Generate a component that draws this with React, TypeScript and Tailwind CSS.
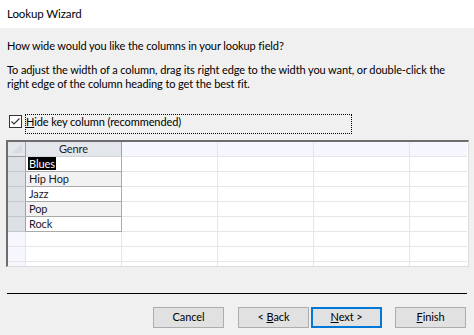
import React from 'react';

const genres = ['Blues', 'Hip Hop', 'Jazz', 'Pop', 'Rock'];
const blankRows = [0, 1, 2];

function Btn({ children, focus }: { children: React.ReactNode; focus?: boolean }) {
  return (
    <div
      className={`w-[71px] h-[21px] flex items-center justify-center bg-[#e1e1e1] ${
        focus ? 'border-2 border-[#0078d7]' : 'border border-[#adadad]'
      }`}
    >
      <span>{children}</span>
    </div>
  );
}

export default function App() {
  return (
    <div
      className="w-[474px] h-[335px] overflow-hidden bg-[#f0f0f0] text-black text-[11px] tracking-[-0.1px]"
      style={{ fontFamily: '"Segoe UI", Lato, sans-serif' }}
    >
      {/* title bar */}
      <div className="h-[28px] bg-white flex items-center pl-[7px] text-[11.5px]">Lookup Wizard</div>

      <div className="flex flex-col">
        <p className="mt-[10px] ml-[7px] leading-[15px]">How wide would you like the columns in your lookup field?</p>
        <p className="mt-[10px] ml-[7px] leading-[14px] whitespace-nowrap">
          To adjust the width of a column, drag its right edge to the width you want, or double-click the
          <br />
          right edge of the column heading to get the best fit.
        </p>

        {/* checkbox */}
        <div className="mt-[23px] flex items-start">
          <div className="ml-[9px] mt-[1px] w-[13px] h-[13px] bg-white border border-[#333] flex items-center justify-center">
            <svg width="11" height="11" viewBox="0 0 11 11">
              <path d="M1.5 5.5 L4 8 L9.5 2.5" fill="none" stroke="#333" strokeWidth="1.2" />
            </svg>
          </div>
          <div className="ml-[3px] w-[327px] h-[20px] border border-dotted border-black leading-[14px]">
            <span className="underline">H</span>ide key column (recommended)
          </div>
        </div>

        {/* grid */}
        <div className="mt-[6px] ml-[6px] w-[463px] h-[127px] border-t-2 border-l-2 border-t-[#6d6d6d] border-l-[#6d6d6d] border-r border-b border-r-[#dcdcdc] border-b-[#dcdcdc] bg-white overflow-hidden">
          {/* header */}
          <div className="flex h-[15px]">
            <div className="w-[18px] h-[15px] bg-[#e3e6ea] border-r border-b border-[#a0a0a0]">
              <svg width="17" height="14" viewBox="0 0 17 14">
                <path d="M4 11 L14 2 L14 11 Z" fill="#d6dbe1" />
              </svg>
            </div>
            <div className="w-[96px] h-[15px] bg-[#e3e6ea] border-r border-r-[#a0a0a0] border-b border-b-[#d4d4d4] text-center leading-[14px] text-[#1e1e1e]">
              Genre
            </div>
            <div className="w-[96px] h-[15px] bg-[#f5f6fe] border-r border-b border-[#e6e6e6]" />
            <div className="w-[96px] h-[15px] bg-[#f5f6fe] border-r border-b border-[#e6e6e6]" />
            <div className="w-[96px] h-[15px] bg-[#f5f6fe] border-r border-b border-[#e6e6e6]" />
            <div className="w-[57px] h-[15px] bg-[#f5f6fe] border-b border-[#e6e6e6]" />
          </div>

          {genres.map((g, i) => (
            <div key={g} className="flex h-[15px]">
              <div className="w-[18px] h-[15px] bg-[#dde1e6] border-r border-r-[#a0a0a0] border-b border-b-[#c4c8cc]" />
              <div
                className={`w-[96px] h-[15px] border-r border-b border-[#a9a9a9] pl-[2px] leading-[14px] text-[#1a1a2a] ${
                  i % 2 === 1 ? 'bg-[#f2f2f2]' : 'bg-white'
                }`}
              >
                {i === 0 ? <span className="bg-black text-white px-[1px]">{g}</span> : <span className="px-[1px]">{g}</span>}
              </div>
              <div className="w-[96px] h-[15px] border-r border-b border-[#e6e6e6]" />
              <div className="w-[96px] h-[15px] border-r border-b border-[#e6e6e6]" />
              <div className="w-[96px] h-[15px] border-r border-b border-[#e6e6e6]" />
              <div className="w-[57px] h-[15px] border-b border-[#e6e6e6]" />
            </div>
          ))}

          {blankRows.map((r) => (
            <div key={r} className="flex h-[15px]">
              <div className="w-[18px] h-[15px] bg-[#f5f6fe] border-r border-b border-[#e6e6e6]" />
              <div className="w-[96px] h-[15px] border-r border-b border-[#e6e6e6]" />
              <div className="w-[96px] h-[15px] border-r border-b border-[#e6e6e6]" />
              <div className="w-[96px] h-[15px] border-r border-b border-[#e6e6e6]" />
              <div className="w-[96px] h-[15px] border-r border-b border-[#e6e6e6]" />
              <div className="w-[57px] h-[15px] border-b border-[#e6e6e6]" />
            </div>
          ))}
        </div>

        {/* separator */}
        <div className="mt-[26px] ml-[7px] w-[460px] h-px bg-black" />

        {/* buttons */}
        <div className="mt-[13px] flex justify-end pr-[8px]">
          <Btn>Cancel</Btn>
          <div className="w-[14px]" />
          <Btn>
            &lt; <span className="underline">B</span>ack
          </Btn>
          <div className="w-[2px]" />
          <Btn focus>
            <span className="underline">N</span>ext &gt;
          </Btn>
          <div className="w-[13px]" />
          <Btn>
            <span className="underline">F</span>inish
          </Btn>
        </div>
      </div>
    </div>
  );
}
